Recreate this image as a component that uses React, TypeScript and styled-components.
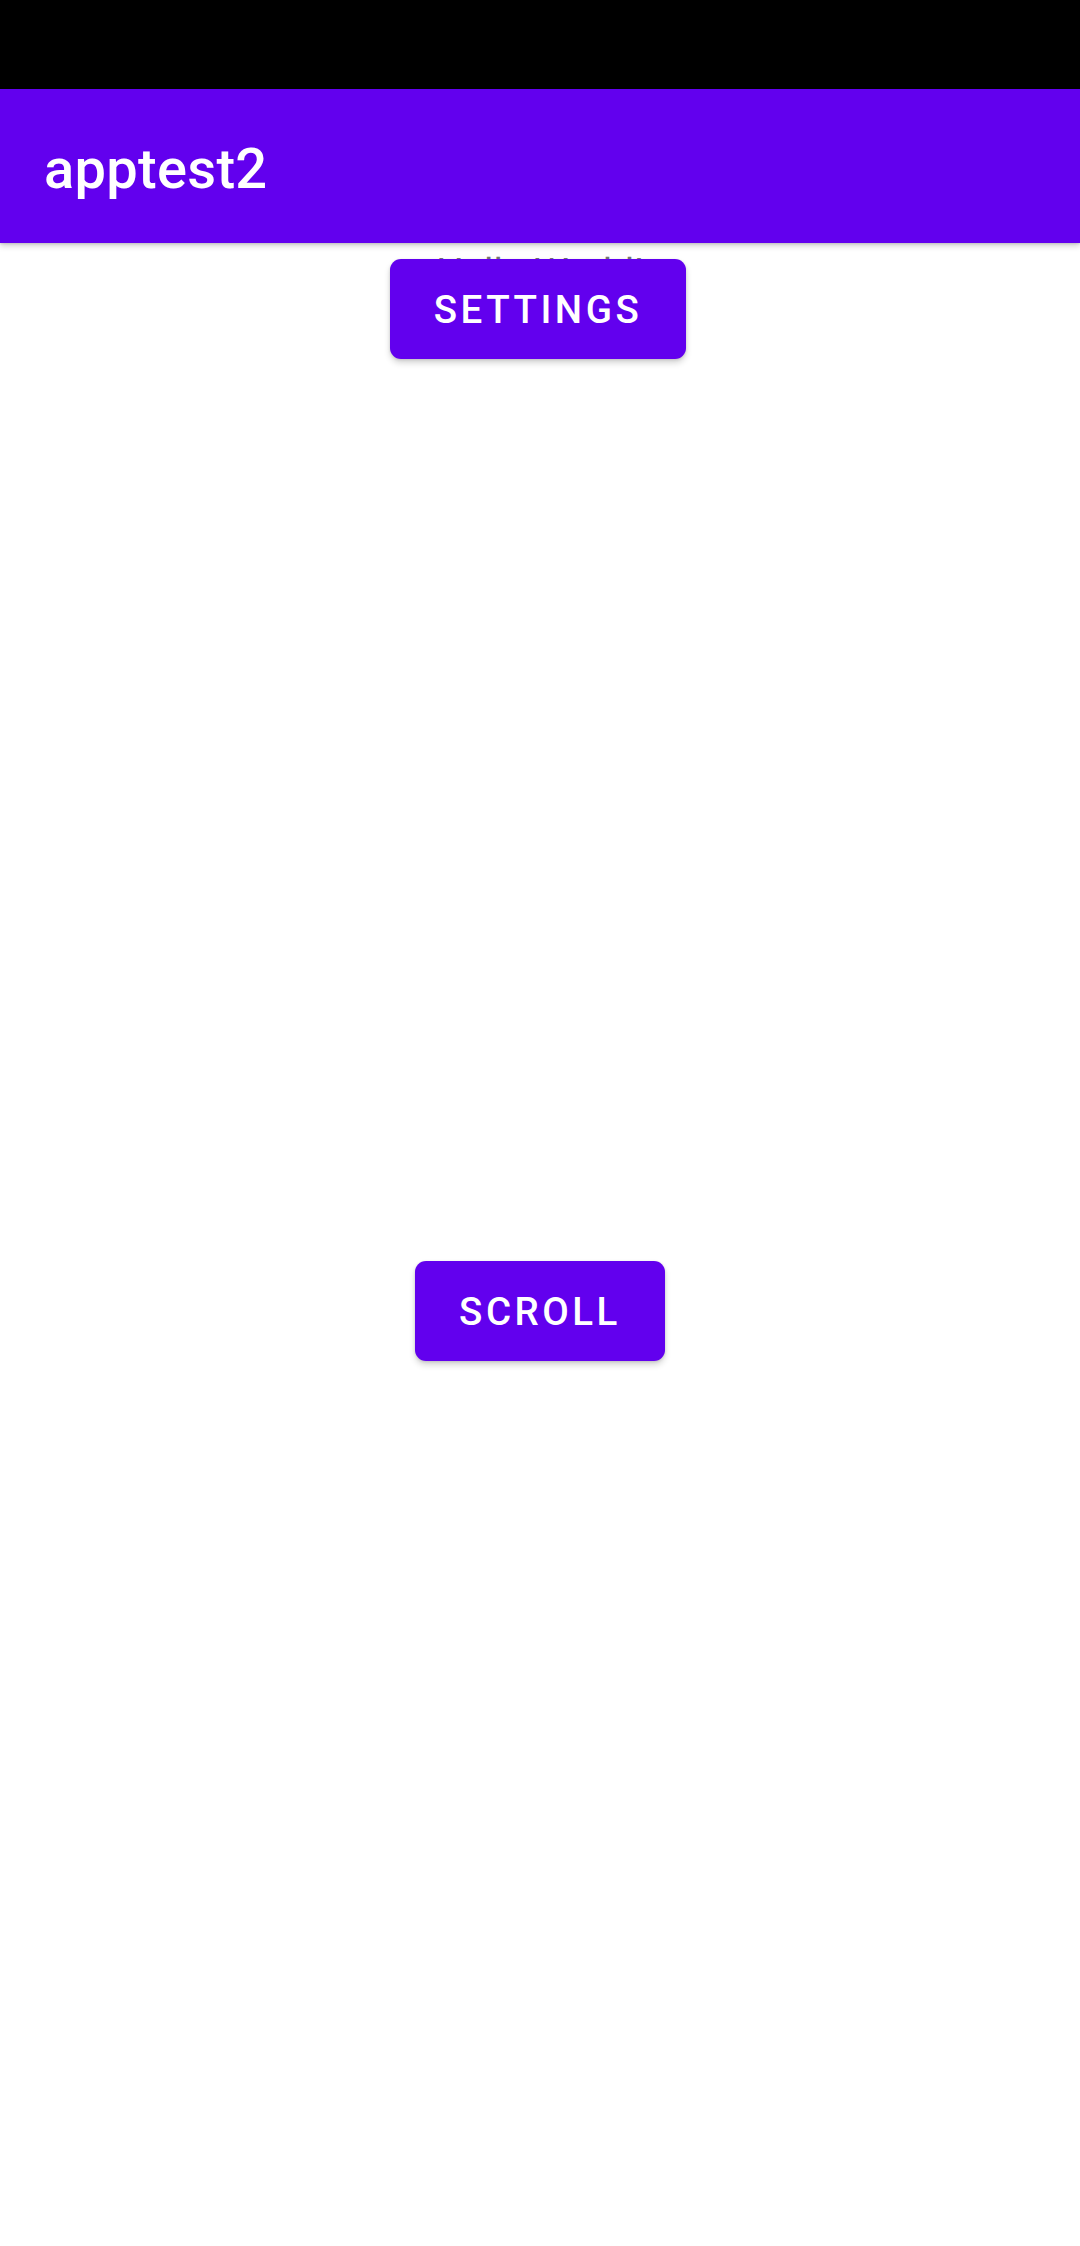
import React from "react";
import styled, { createGlobalStyle } from "styled-components";

const GlobalStyle = createGlobalStyle`
  html, body { margin: 0; padding: 0; background: #fff; }
  body { font-family: Roboto, "Noto Sans", "Liberation Sans", sans-serif; }
`;

const Screen = styled.div`
  width: 1080px; height: 2246px;
  display: flex; flex-direction: column;
  background: #fff;
  overflow: hidden;
`;

const StatusBar = styled.div`
  height: 89px; flex-shrink: 0;
  background: #000;
`;

const AppBar = styled.header`
  height: 154px; flex-shrink: 0;
  box-sizing: border-box;
  display: flex; align-items: center;
  padding: 5px 44px 0;
  background: #6200ee;
  box-shadow: 0 3px 6px rgba(0, 0, 0, 0.18), 0 1px 2px rgba(0, 0, 0, 0.12);
  position: relative; z-index: 2;
`;

const Title = styled.h1`
  margin: 0;
  font-size: 56px; font-weight: 500;
  color: #fff;
  letter-spacing: 0.3px;
`;

const Content = styled.main`
  flex: 1;
  display: flex; flex-direction: column; align-items: center;
`;

/* text and button share one grid cell, the button sits on top */
const TopStack = styled.div`
  display: grid;
  justify-items: center;
  width: 100%;
  > * { grid-area: 1 / 1; }
`;

const Hello = styled.p`
  margin: 0;
  padding-top: 7px;
  font-size: 38.5px; line-height: 45px;
  color: #757575;
`;

const Button = styled.button<{ $top: number; $shift?: number }>`
  margin-top: ${({ $top }) => $top}px;
  margin-left: ${({ $shift = 0 }) => $shift}px;
  height: 100px;
  padding: 0 44px;
  border: none; border-radius: 11px;
  background: #6200ee;
  color: #fff;
  font-family: Roboto, "Noto Sans", sans-serif;
  font-size: 38.5px; font-weight: 500;
  letter-spacing: 3.5px;
  text-transform: uppercase;
  box-shadow: 0 4px 6px rgba(0, 0, 0, 0.16), 0 1px 3px rgba(0, 0, 0, 0.12);
  z-index: 1;
`;

export default function App() {
  return (
    <Screen>
      <GlobalStyle />
      <StatusBar />
      <AppBar>
        <Title>apptest2</Title>
      </AppBar>
      <Content>
        <TopStack>
          <Hello>Hello World!</Hello>
          <Button $top={16} $shift={-4}>Settings</Button>
        </TopStack>
        <Button $top={902}>Scroll</Button>
      </Content>
    </Screen>
  );
}
